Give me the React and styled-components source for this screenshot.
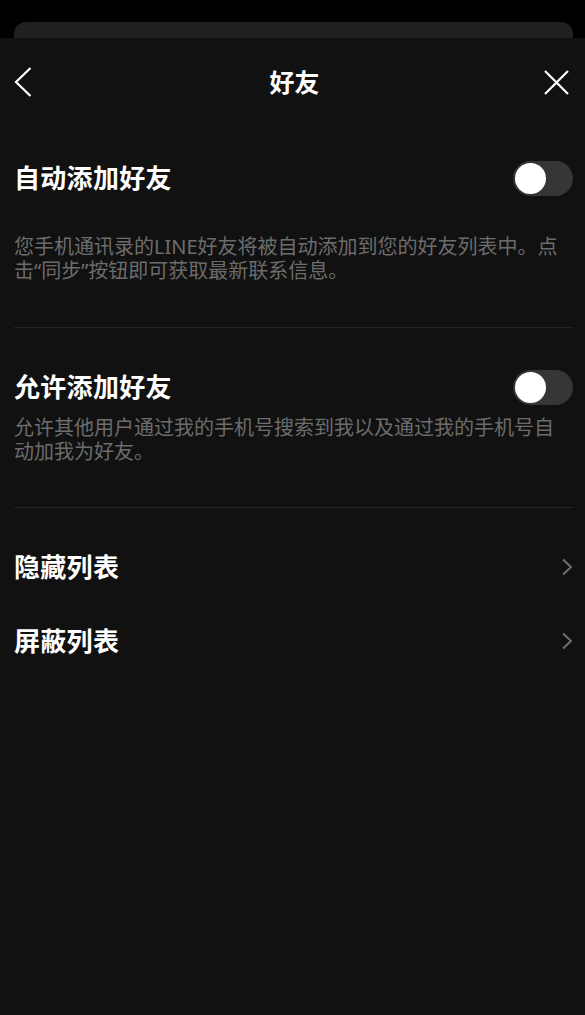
import React from 'react';
import styled, { createGlobalStyle } from 'styled-components';

const GlobalStyle = createGlobalStyle`
  html, body {
    margin: 0;
    padding: 0;
    background: #000;
  }
  body {
    font-family: "Noto Sans CJK SC", "Noto Sans", sans-serif;
    -webkit-font-smoothing: antialiased;
  }
`;

const Screen = styled.div`
  width: 585px;
  height: 1015px;
  background: #000;
  display: flex;
  flex-direction: column;
  overflow: hidden;
`;

const Backdrop = styled.div`
  height: 38px;
  padding: 22px 12px 0 14px;
  box-sizing: border-box;
  display: flex;
`;

const BehindCard = styled.div`
  flex: 1;
  background: #1f2022;
  border-radius: 12px 12px 0 0;
`;

const Sheet = styled.div`
  flex: 1;
  background: #111111;
  padding: 0 12px 0 14px;
  display: flex;
  flex-direction: column;
`;

const Header = styled.header`
  height: 88px;
  display: grid;
  grid-template-columns: 1fr auto 1fr;
  align-items: center;
  margin-right: -2px;
`;

const IconButton = styled.button`
  background: none;
  border: none;
  padding: 0;
  width: 36px;
  height: 30px;
  display: flex;
  align-items: center;
  justify-self: ${({ $align }) => ($align === 'right' ? 'end' : 'start')};
  justify-content: ${({ $align }) => ($align === 'right' ? 'flex-end' : 'flex-start')};
  margin-right: ${({ $align }) => ($align === 'right' ? '6px' : '0')};
  color: #fff;
`;

const Title = styled.h1`
  margin: 0;
  padding-bottom: 2px;
  font-size: 25px;
  font-weight: 700;
  color: #fff;
`;

const Section = styled.section`
  padding: ${({ $top }) => $top}px 0 ${({ $bottom }) => $bottom}px;
  border-bottom: ${({ $divider }) => ($divider ? '1px solid #232323' : 'none')};
`;

const Row = styled.div`
  height: ${({ $height }) => $height}px;
  display: flex;
  align-items: center;
  justify-content: space-between;
`;

const Label = styled.span`
  padding-bottom: 4px;
  font-size: 26px;
  font-weight: 700;
  color: #fff;
  letter-spacing: 0.3px;
`;

const Description = styled.p`
  margin: ${({ $gap }) => $gap}px 0 0;
  font-family: "Noto Sans", "Noto Sans CJK SC", sans-serif;
  font-size: 20px;
  line-height: 24px;
  color: #6c6c6c;
  padding-right: 2px;
`;

const Track = styled.div`
  width: 60px;
  height: 35px;
  border-radius: 18px;
  background: #363638;
  padding: 2px;
  box-sizing: border-box;
  display: flex;
  align-items: center;
  justify-content: ${({ $on }) => ($on ? 'flex-end' : 'flex-start')};
`;

const Knob = styled.div`
  width: 31px;
  height: 31px;
  border-radius: 50%;
  background: #fff;
`;

const NavList = styled.div`
  padding-top: 22px;
  display: flex;
  flex-direction: column;
`;

const Toggle = ({ on }) => (
  <Track $on={on}>
    <Knob />
  </Track>
);

const Chevron = () => (
  <svg width="12" height="18" viewBox="0 0 12 18" fill="none">
    <path d="M2 1.5L10 9L2 16.5" stroke="#6f6f6f" strokeWidth="2" />
  </svg>
);

const App = () => (
  <>
    <GlobalStyle />
    <Screen>
      <Backdrop>
        <BehindCard />
      </Backdrop>
      <Sheet>
        <Header>
          <IconButton>
            <svg width="18" height="30" viewBox="0 0 18 30" fill="none">
              <path d="M16.5 1L2 15L16.5 29" stroke="#fff" strokeWidth="2.2" />
            </svg>
          </IconButton>
          <Title>好友</Title>
          <IconButton $align="right">
            <svg width="25" height="25" viewBox="0 0 25 25" fill="none">
              <path d="M1 1L24 24M24 1L1 24" stroke="#fff" strokeWidth="2.2" />
            </svg>
          </IconButton>
        </Header>

        <Section $top={26} $bottom={44} $divider>
          <Row $height={52}>
            <Label>自动添加好友</Label>
            <Toggle on={false} />
          </Row>
          <Description $gap={31}>
            您手机通讯录的LINE好友将被自动添加到您的好友列表中。点击“同步”按钮即可获取最新联系信息。
          </Description>
        </Section>

        <Section $top={33} $bottom={43} $divider>
          <Row $height={52}>
            <Label>允许添加好友</Label>
            <Toggle on={false} />
          </Row>
          <Description $gap={3}>
            允许其他用户通过我的手机号搜索到我以及通过我的手机号自动加我为好友。
          </Description>
        </Section>

        <NavList>
          <Row $height={74}>
            <Label>隐藏列表</Label>
            <Chevron />
          </Row>
          <Row $height={74}>
            <Label>屏蔽列表</Label>
            <Chevron />
          </Row>
        </NavList>
      </Sheet>
    </Screen>
  </>
);

export default App;
